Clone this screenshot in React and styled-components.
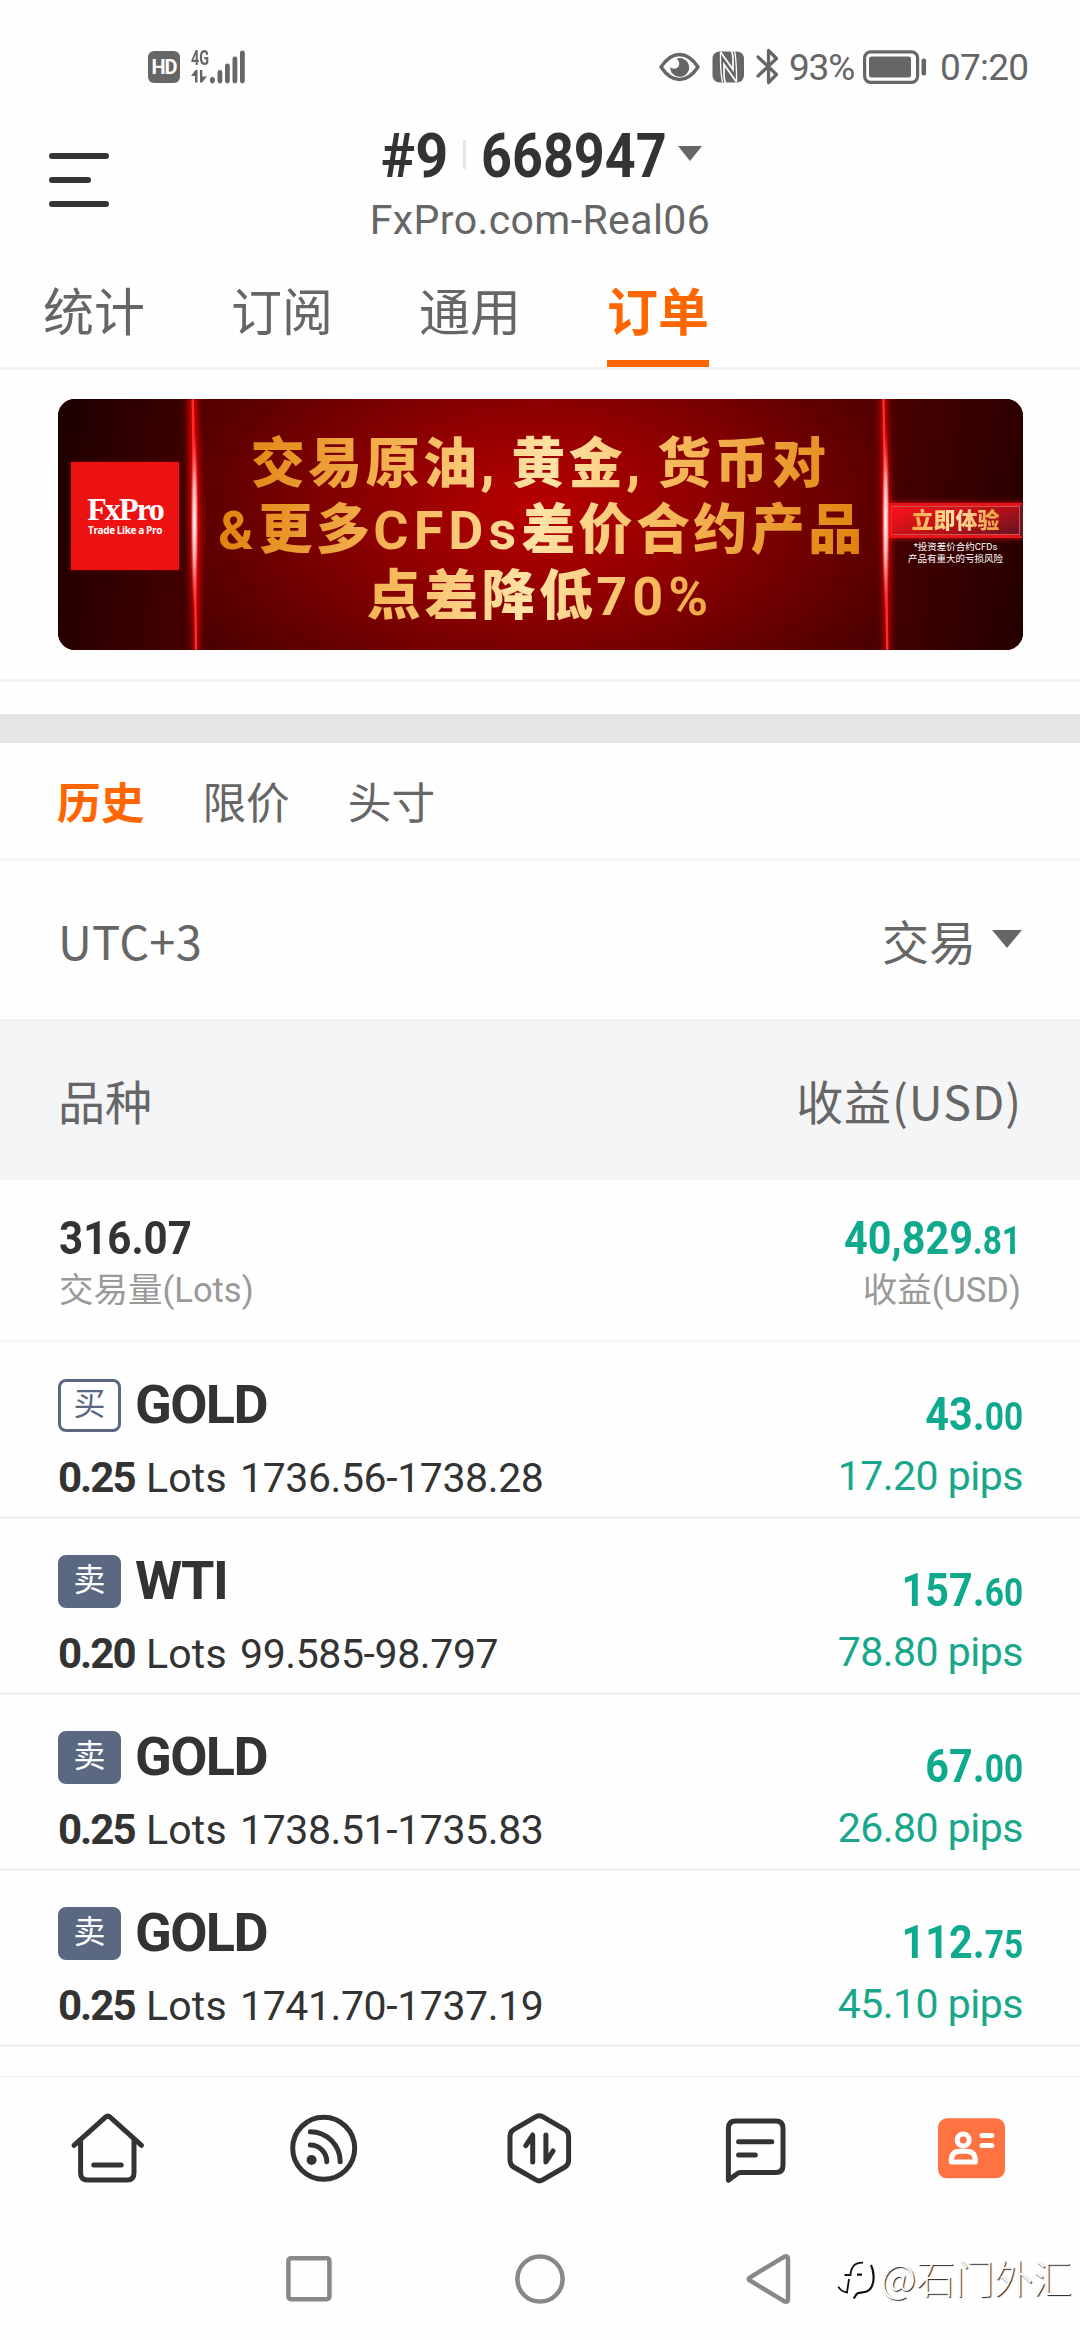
import React, { Component } from 'react';
import styled, { createGlobalStyle } from 'styled-components';

const GlobalStyle = createGlobalStyle`
  * {
    box-sizing: border-box;
  }
  body {
    margin: 0;
    background: #fefefe;
    font-family: Roboto, "Noto Sans CJK SC", sans-serif;
    color: #333;
  }
  svg {
    display: block;
    flex: none;
  }
`
const Phone = styled.div`
  position: relative;
  display: flex;
  flex-direction: column;
  width: 1080px;
  height: 2340px;
  overflow: hidden;
`
const StatusBar = styled.div`
  display: flex;
  align-items: center;
  justify-content: space-between;
  height: 116px;
  padding: 17px 52px 0 148px;
  color: #666;
`
const StatusGroup = styled.div`
  display: flex;
  align-items: center;
`
const StatusText = styled.span`
  width: ${props => props.$width}px;
  margin: 3px ${props => props.$after}px 0 0;
  font-size: 37px;
  line-height: 40px;
  letter-spacing: ${props => props.$spacing}px;
  white-space: nowrap;
`
const StatusIcon = styled.svg`
  margin-right: ${props => props.$after}px;
`
const HdBadge = styled.span`
  display: flex;
  align-items: center;
  justify-content: center;
  width: 32px;
  height: 32px;
  margin-right: 11px;
  border-radius: 6px;
  background: #666;
  color: #fff;
  font-size: 20px;
  font-weight: 700;
  letter-spacing: -1px;
`
const Network = styled.div`
  display: flex;
  flex-direction: column;
  width: 19px;
  height: 33px;
  gap: 4px;
`
const NetworkType = styled.span`
  font-size: 20px;
  font-weight: 700;
  line-height: 16px;
  transform: scaleX(0.72);
  transform-origin: left;
`
const Header = styled.div`
  display: grid;
  grid-template-columns: 200px 1fr 200px;
  align-items: center;
  height: 128px;
`
const MenuIcon = styled.svg`
  margin-left: 49px;
`
const Account = styled.div`
  display: flex;
  flex-direction: column;
  align-items: center;
`
const AccountTitle = styled.div`
  display: flex;
  align-items: center;
  height: 80px;
  padding-left: 3px;
`
/* narrow digits: the box has the final width, the glyphs are squeezed into it */
const Narrow = styled.span`
  display: block;
  width: ${props => props.$width}px;
  font-size: 62px;
  font-weight: 700;
  line-height: 80px;
  white-space: nowrap;
  transform: scaleX(${props => props.$scale});
  transform-origin: left;
`
const TitleDivider = styled.span`
  width: 3px;
  height: 29px;
  margin: 0 15px 4px 15px;
  background: #e5e5e5;
`
const Arrow = styled.span`
  width: 0;
  height: 0;
  border: ${props => props.$size}px solid transparent;
  border-top: ${props => props.$drop}px solid #666;
  border-bottom: 0;
  margin: ${props => props.$margin};
`
const Server = styled.div`
  height: 48px;
  font-size: 41px;
  line-height: 48px;
  letter-spacing: 0.4px;
  color: #666;
`
const Tabs = styled.div`
  display: flex;
  gap: 86px;
  height: 126px;
  padding-left: 43px;
  border-bottom: 3px solid #f2f2f2;
`
const Tab = styled.div`
  display: flex;
  align-items: center;
  height: 123px;
  padding-top: 14px;
  font-size: 51px;
  color: ${props => props.$active ? '#ff6600' : '#666'};
  font-weight: ${props => props.$active ? 700 : 400};
  border-bottom: 7px solid ${props => props.$active ? '#ff6600' : 'transparent'};
`
const BannerBox = styled.div`
  height: 312px;
  padding: 29px 57px 0 58px;
  border-bottom: 3px solid #f2f2f2;
`
const Banner = styled.div`
  position: relative;
  display: flex;
  width: 965px;
  height: 251px;
  border-radius: 17px;
  overflow: hidden;
  background: radial-gradient(ellipse 420px 250px at 482px 110px, #b90000 0%, #930000 35%, #6c0000 68%, #450000 100%);
`
const BannerSide = styled.div`
  display: flex;
  flex-direction: column;
  width: ${props => props.$width}px;
  background: ${props => props.$back};
`
const BannerArt = styled.svg`
  position: absolute;
  left: 0;
  top: 0;
`
const Logo = styled.div`
  position: relative;
  z-index: 1;
  display: flex;
  flex-direction: column;
  align-items: center;
  width: 108px;
  height: 108px;
  margin: 63px 0 0 13px;
  padding-top: 31px;
  background: #ed1212;
  color: #fff;
  box-shadow: 0 0 4px #700;
`
const LogoName = styled.span`
  font-family: "Liberation Serif", serif;
  font-size: 32px;
  font-weight: 700;
  line-height: 32px;
  letter-spacing: -1.8px;
`
const LogoSlogan = styled.span`
  font-family: "Open Sans", sans-serif;
  font-size: 10px;
  font-weight: 700;
  line-height: 11px;
  letter-spacing: -0.4px;
  white-space: nowrap;
`
const Slogan = styled.div`
  flex: 1;
  position: relative;
  z-index: 1;
  padding: 33px 0 0 24px;
`
const SloganText = styled.div`
  width: 644px;
  font-size: 54px;
  font-weight: 900;
  line-height: 66px;
  letter-spacing: 3.4px;
  text-align: center;
  white-space: nowrap;
  color: transparent;
  background: linear-gradient(100deg, #e0810c 2%, #f6b95c 30%, #ffe3a6 50%, #f6b95c 68%, #e0810c 98%);
  background-clip: text;
  -webkit-background-clip: text;
`
const Latin = styled.span`
  font-weight: 700;
  letter-spacing: 5px;
`
const Comma = styled.span`
  margin-right: 13px;
`
const TryButton = styled.div`
  display: flex;
  align-items: center;
  justify-content: center;
  height: 35px;
  margin-top: 104px;
  border: 3px solid #e8131b;
  border-right-color: #6d1820;
  outline: 1px solid #c9564d;
  outline-offset: -4px;
  background: linear-gradient(160deg, #f0131b 10%, #b01018 60%, #641324 100%);
  box-shadow: 0 0 5px #e01018;
`
const TryText = styled.span`
  font-size: 22px;
  font-weight: 900;
  line-height: 28px;
  color: transparent;
  background: linear-gradient(90deg, #f5a742, #ffe3a6 50%, #f09a35);
  background-clip: text;
  -webkit-background-clip: text;
`
const Risk = styled.div`
  margin-top: 3px;
  font-size: 9.5px;
  line-height: 11.5px;
  text-align: center;
  white-space: nowrap;
  color: #fff;
`
const Band = styled.div`
  height: 29px;
  margin-top: 32px;
  background: #e5e5e5;
`
const SubTabs = styled.div`
  display: flex;
  align-items: center;
  gap: 58px;
  height: 118px;
  padding: 0 57px 2px;
  border-bottom: 3px solid #f5f6f8;
`
const SubTab = styled.span`
  font-size: 43.7px;
  color: ${props => props.$active ? '#ff6600' : '#666'};
  font-weight: ${props => props.$active ? 700 : 400};
`
const Bar = styled.div`
  display: flex;
  align-items: center;
  justify-content: space-between;
  height: ${props => props.$height}px;
  padding: ${props => props.$gray ? 5 : 7}px 58px 0;
  font-family: "Noto Sans CJK SC", sans-serif;
  font-size: 47px;
  line-height: 60px;
  color: #666;
  background: ${props => props.$gray ? '#f4f5f7' : 'transparent'};
  border-top: ${props => props.$gray ? '3px solid #f2f2f4' : '0'};
`
const BarText = styled.span`
  margin-bottom: 7px;
  letter-spacing: ${props => props.$spacing || 0}px;
`
const Dropdown = styled.span`
  display: flex;
  align-items: center;
`
const Summary = styled.div`
  display: flex;
  justify-content: space-between;
  height: 163px;
  padding: 34px 59px 0;
  border-bottom: 3px solid #f4f5f6;
`
const Column = styled.div`
  display: flex;
  flex-direction: column;
  align-items: ${props => props.$right ? 'flex-end' : 'flex-start'};
  padding-top: ${props => props.$top || 0}px;
  gap: ${props => props.$gap}px;
`
const Volume = styled.span`
  height: 48px;
  font-size: 47px;
  font-weight: 700;
  line-height: 48px;
  transform: scaleX(0.895);
  transform-origin: left;
`
const Label = styled.span`
  font-size: 34.5px;
  line-height: 40px;
  color: #999;
`
const Profit = styled.span`
  height: 48px;
  font-size: 47px;
  font-weight: 700;
  line-height: 48px;
  color: #0faa8e;
  transform: scaleX(0.88);
  transform-origin: right;
`
const Cents = styled.small`
  font-size: 38px;
  line-height: 1;
`
const Order = styled.div`
  display: flex;
  justify-content: space-between;
  height: 176px;
  padding: 35px 57px 0 58px;
  border-bottom: 3px solid #f2f2f2;
`
const Symbol = styled.div`
  display: flex;
  align-items: center;
  gap: 14px;
  height: 54px;
  font-size: 54px;
  font-weight: 700;
  line-height: 56px;
  letter-spacing: -1.6px;
`
const Side = styled.span`
  display: flex;
  align-items: center;
  justify-content: center;
  width: 63px;
  height: 53px;
  border: 3px solid #5a6881;
  border-radius: 8px;
  padding-bottom: 2px;
  font-size: 32px;
  font-weight: 400;
  line-height: 40px;
  letter-spacing: 0;
  color: ${props => props.$sell ? '#fff' : '#5a6881'};
  background: ${props => props.$sell ? '#5a6881' : 'transparent'};
`
const Detail = styled.div`
  display: flex;
  font-size: 41px;
  line-height: 50px;
  letter-spacing: -0.4px;
  b {
    width: 88px;
    font-size: 42px;
    letter-spacing: -2px;
  }
`
const Unit = styled.span`
  width: 94px;
  letter-spacing: 0.2px;
`
const Pips = styled.span`
  font-size: 41px;
  line-height: 48px;
  letter-spacing: -0.5px;
  color: #18a68d;
`
const TabBar = styled.div`
  display: flex;
  align-items: center;
  justify-content: space-around;
  height: 142px;
  margin-top: auto;
  border-top: 1px solid #eee;
`
const SystemNav = styled.div`
  display: flex;
  align-items: center;
  height: 122px;
  padding-left: 284px;
  gap: 180px;
`
const Watermark = styled.div`
  position: absolute;
  right: 8px;
  bottom: 38px;
  display: flex;
  align-items: center;
  gap: 4px;
  font-family: "Noto Sans CJK SC", sans-serif;
  font-size: 39px;
  font-weight: 300;
  line-height: 52px;
  color: #fff;
  text-shadow: 1px 1px 1px #222;
`
const WatermarkLogo = styled.svg`
  margin-top: 8px;
`

const tabIcon = {
  width: 80,
  height: 80,
  viewBox: '0 0 80 80',
  fill: 'none',
  stroke: '#333',
  strokeWidth: 5,
  strokeLinecap: 'round',
  strokeLinejoin: 'round'
}

const HomeIcon = () => (
  <svg {...tabIcon}>
    <path d="M6 37.3 L37.5 9.2 Q39.8 7.2 42.1 9.2 L73.5 37.3" />
    <path d="M12.6 32 V65 Q12.6 72 19.6 72 H59 Q66 72 66 65 V32" />
    <path d="M25.8 57 H53.2" />
  </svg>
)

const FeedIcon = () => (
  <svg {...tabIcon}>
    <circle cx="39.7" cy="40.3" r="31" />
    <circle cx="27.6" cy="52" r="5" fill="#333" stroke="none" />
    <path d="M26.3 37 A16.6 16.6 0 0 1 42.8 53.7" />
    <path d="M26.3 23.7 A30 30 0 0 1 56.2 53.7" />
  </svg>
)

const TradeIcon = () => (
  <svg {...tabIcon}>
    <path d="M36 8.7 Q39.3 6.8 42.6 8.7 L65 21.6 Q68.6 23.8 68.6 28 V52.6 Q68.6 56.8 65 59 L42.6 71.9 Q39.3 73.8 36 71.9 L13.6 59 Q10 56.8 10 52.6 V28 Q10 23.8 13.6 21.6 Z" />
    <path d="M25.8 37.7 L32.7 27 V54" />
    <path d="M45.9 27 V54 L53 43" />
  </svg>
)

const ChatIcon = () => (
  <svg {...tabIcon}>
    <path d="M12.4 72.3 V20.3 Q12.4 13 19.6 13 H59.8 Q67 13 67 20.3 V57.2 Q67 64.5 59.8 64.5 H24.5 Q22.5 64.5 20.8 65.9 Z" />
    <path d="M22.6 33.8 H55.8 M22.6 47 H39.3" />
  </svg>
)

const CardIcon = () => (
  <svg {...tabIcon} stroke="#fff">
    <rect x="6" y="10.3" width="67" height="60" rx="9" fill="#ff7343" stroke="none" />
    <circle cx="31.2" cy="32" r="6" />
    <path d="M19.3 54 V52.2 Q19.3 43.2 28.3 43.2 H34.3 Q43.3 43.2 43.3 52.2 V54 Z" />
    <path d="M50 27.4 H59.8 M50 37.4 H59.8" />
  </svg>
)

class App extends Component {
  state = {
    tabs: ['统计', '订阅', '通用', '订单'],
    activeTab: '订单',
    subTabs: ['历史', '限价', '头寸'],
    activeSubTab: '历史',
    orders: [
      { id: 1, side: '买', symbol: 'GOLD', lots: '0.25', range: '1736.56-1738.28', profit: '43.', cents: '00', pips: '17.20' },
      { id: 2, side: '卖', symbol: 'WTI', lots: '0.20', range: '99.585-98.797', profit: '157.', cents: '60', pips: '78.80' },
      { id: 3, side: '卖', symbol: 'GOLD', lots: '0.25', range: '1738.51-1735.83', profit: '67.', cents: '00', pips: '26.80' },
      { id: 4, side: '卖', symbol: 'GOLD', lots: '0.25', range: '1741.70-1737.19', profit: '112.', cents: '75', pips: '45.10' }
    ]
  }

  renderStatus() {
    return (
      <StatusBar>
        <StatusGroup>
          <HdBadge>HD</HdBadge>
          <Network>
            <NetworkType>4G</NetworkType>
            <svg width="17" height="13" viewBox="0 0 17 13" fill="#666">
              <path d="M0 6 L4.5 0 H6.5 V12.5 H4 V6 Z M9 0 H11.3 V6.5 H16 L11 12.5 H9 Z" />
            </svg>
          </Network>
          <svg width="36" height="34" viewBox="0 0 36 34" stroke="#666" strokeWidth="4.8" strokeLinecap="round">
            <path d="M2.4 29.5 V31 M9.9 22.5 V31 M17.4 16 V31 M24.9 9 V31 M32.4 3 V31" />
          </svg>
        </StatusGroup>
        <StatusGroup>
          <StatusIcon $after={12} width="41" height="30" viewBox="0 0 41 30" fill="none" stroke="#666" strokeWidth="3.4">
            <path d="M2 15 C8 6 14 2.5 20.5 2.5 S33 6 39 15 C33 24 27 27.5 20.5 27.5 S8 24 2 15 Z" strokeLinejoin="round" />
            <path d="M17.5 6.6 A9.4 9.4 0 1 1 11.3 15 C13 17.5 18.5 17.5 20 13.5 C20.8 11 19.5 8 17.5 6.6 Z" fill="#666" stroke="none" />
          </StatusIcon>
          <StatusIcon $after={11} width="33" height="32" viewBox="0 0 33 32">
            <rect x="0.5" y="0.5" width="31.5" height="31" rx="7" fill="#666" />
            <path d="M8.5 1 L21 18.5 V8 Q21 3 19.5 0 M24.5 31 L12 13.5 V24 Q12 29 13.5 32" fill="none" stroke="#fff" strokeWidth="1.7" />
            <path d="M8.5 1 L8.5 10 Q9 26 10.5 31 M24.5 31 V22 Q24 6 22.5 0" fill="none" stroke="#fff" strokeWidth="1.3" />
          </StatusIcon>
          <StatusIcon $after={10} width="23" height="37" viewBox="0 0 23 37" fill="none" stroke="#666" strokeWidth="3.2" strokeLinejoin="round" strokeLinecap="round">
            <path d="M2 9 L20.5 26.5 L12.5 34.5 V21 M2 28 L20.5 10.5 L12.5 2.5 V16" />
          </StatusIcon>
          <StatusText $width={67} $after={7} $spacing={-1.2}>93%</StatusText>
          <StatusIcon $after={13} width="64" height="34" viewBox="0 0 64 34">
            <rect x="1.6" y="1.8" width="53" height="30.5" rx="6" fill="none" stroke="#666" strokeWidth="3.2" />
            <rect x="6" y="6.5" width="42" height="21" rx="2.5" fill="#666" />
            <rect x="58.5" y="8.5" width="4.6" height="17" rx="2" fill="#666" />
          </StatusIcon>
          <StatusText $width={88} $after={0} $spacing={-0.8}>07:20</StatusText>
        </StatusGroup>
      </StatusBar>
    )
  }

  renderBanner() {
    return (
      <Banner>
        <BannerSide $width={136} $back="linear-gradient(100deg, #1c0000 0%, #350000 55%, #470000 100%)">
          <Logo>
            <LogoName>FxPro</LogoName>
            <LogoSlogan>Trade Like a Pro</LogoSlogan>
          </Logo>
        </BannerSide>
        <Slogan>
          <SloganText>
            <div>交易原油<Comma>,</Comma>黄金<Comma>,</Comma>货币对</div>
            <div><Latin>&amp;</Latin>更多<Latin>CFDs</Latin>差价合约产品</div>
            <div>点差降低<Latin>70%</Latin></div>
          </SloganText>
        </Slogan>
        <BannerSide $width={135} $back="linear-gradient(100deg, #4a0000 0%, #360000 55%, #240000 100%)">
          <TryButton><TryText>立即体验</TryText></TryButton>
          <Risk>*投资差价合约CFDs<br />产品有重大的亏损风险</Risk>
        </BannerSide>
        {/* the two light beams */}
        <BannerArt width="965" height="251" viewBox="0 0 965 251">
          <defs>
            <filter id="glow" x="-300%" width="700%"><feGaussianBlur stdDeviation="3.5 1" /></filter>
            <radialGradient id="beam">
              <stop offset="0" stopColor="#fff" />
              <stop offset="0.45" stopColor="#ffa9a9" />
              <stop offset="1" stopColor="#ff2a2a" stopOpacity="0" />
            </radialGradient>
          </defs>
          <path d="M131 0 H138 L142 125 L140 251 H136 L132 125 Z" fill="#f00" filter="url(#glow)" />
          <path d="M134.8 0 L138 251" stroke="#ff2b2b" strokeWidth="2.4" />
          <ellipse cx="136.5" cy="122" rx="4" ry="95" fill="url(#beam)" />
          <path d="M823 0 H828 L832 125 L831 251 H827 L825 125 Z" fill="#f00" filter="url(#glow)" />
          <path d="M825.5 0 L829.3 251" stroke="#ff2b2b" strokeWidth="2.4" />
          <ellipse cx="827.7" cy="122" rx="4" ry="95" fill="url(#beam)" />
        </BannerArt>
      </Banner>
    )
  }

  render() {
    return (
      <Phone>
        <GlobalStyle />
        {this.renderStatus()}
        <Header>
          <MenuIcon width="60" height="56" viewBox="0 0 60 56" stroke="#333" strokeWidth="6" strokeLinecap="round">
            <path d="M3 4 H57 M3 28 H39 M3 52 H57" />
          </MenuIcon>
          <Account>
            <AccountTitle>
              <Narrow $width={67} $scale={0.93}>#9</Narrow>
              <TitleDivider />
              <Narrow $width={183} $scale={0.87}>668947</Narrow>
              <Arrow $size={12} $drop={15} $margin="0 0 5px 14px" />
            </AccountTitle>
            <Server>FxPro.com-Real06</Server>
          </Account>
        </Header>
        <Tabs>
          {this.state.tabs.map((item) => (
            <Tab key={item} $active={item === this.state.activeTab} onClick={() => this.setState({ activeTab: item })}>
              {item}
            </Tab>
          ))}
        </Tabs>
        <BannerBox>{this.renderBanner()}</BannerBox>
        <Band />
        <SubTabs>
          {this.state.subTabs.map((item) => (
            <SubTab key={item} $active={item === this.state.activeSubTab} onClick={() => this.setState({ activeSubTab: item })}>
              {item}
            </SubTab>
          ))}
        </SubTabs>
        <Bar $height={158}>
          <BarText $spacing={0.2}>UTC+3</BarText>
          <Dropdown>
            <BarText>交易</BarText>
            <Arrow $size={15} $drop={18} $margin="0 0 10px 16px" />
          </Dropdown>
        </Bar>
        <Bar $height={161} $gray>
          <BarText>品种</BarText>
          <BarText $spacing={0.9}>收益(USD)</BarText>
        </Bar>
        <Summary>
          <Column $gap={8}>
            <Volume>316.07</Volume>
            <Label>交易量(Lots)</Label>
          </Column>
          <Column $gap={8} $right>
            <Profit>40,829<Cents>.81</Cents></Profit>
            <Label>收益(USD)</Label>
          </Column>
        </Summary>
        {this.state.orders.map((item) => (
          <Order key={item.id}>
            <Column $gap={21}>
              <Symbol>
                <Side $sell={item.side === '卖'}>{item.side}</Side>
                {item.symbol}
              </Symbol>
              <Detail>
                <b>{item.lots}</b>
                <Unit>Lots</Unit>
                <span>{item.range}</span>
              </Detail>
            </Column>
            <Column $gap={14} $top={12} $right>
              <Profit>{item.profit}<Cents>{item.cents}</Cents></Profit>
              <Pips>{item.pips} pips</Pips>
            </Column>
          </Order>
        ))}
        <TabBar>
          <HomeIcon />
          <FeedIcon />
          <TradeIcon />
          <ChatIcon />
          <CardIcon />
        </TabBar>
        <SystemNav>
          <svg width="50" height="54" viewBox="0 0 50 54" fill="none" stroke="#888" strokeWidth="4.5">
            <rect x="4.4" y="6.2" width="41" height="41" rx="2.5" />
          </svg>
          <svg width="52" height="54" viewBox="0 0 52 54" fill="none" stroke="#888" strokeWidth="4.5">
            <circle cx="26" cy="27" r="22.6" />
          </svg>
          <svg width="50" height="54" viewBox="0 0 50 54" fill="none" stroke="#888" strokeWidth="4.5" strokeLinejoin="round">
            <path d="M3.8 25.6 Q1.6 27 3.8 28.4 L38 49.2 Q42 51 42 47 V7 Q42 3 38 4.8 Z" />
          </svg>
        </SystemNav>
        <Watermark>
          <WatermarkLogo width="40" height="42" viewBox="0 0 40 42" fill="none" stroke="#111" strokeWidth="1.8">
            <path d="M26 3.7 C18 3.5 14 7 13.5 16 H7.5 M12 20 L10 33.5 C6 33 3 31 1.3 27.7" />
            <path d="M34 6 C37 12 37.5 22 35 27 C32 34 26 33 21 34 C19 35 18 37 16.8 39.5 M20 15.7 H25" strokeWidth="2.2" />
          </WatermarkLogo>
          @石门外汇
        </Watermark>
      </Phone>
    )
  }
}

export default App;
